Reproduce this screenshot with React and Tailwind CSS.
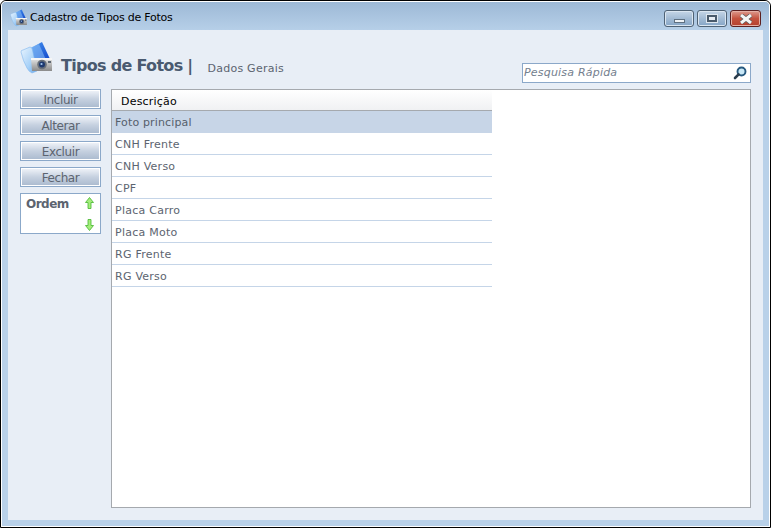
function FolderCam({ s = 34, id = "a" }) {
  return (
    <svg width={s} height={s} viewBox="0 0 34 34" className="shrink-0">
      <defs>
        <linearGradient id={id + "b"} x1="0" y1="0" x2="1" y2="1"><stop offset="0" stopColor="#4a9bf5" /><stop offset="1" stopColor="#0a3cc4" /></linearGradient>
        <linearGradient id={id + "f"} x1="0" y1="0" x2="1" y2="1"><stop offset="0" stopColor="#e9f4fe" /><stop offset="0.6" stopColor="#a9d2f8" /><stop offset="1" stopColor="#6aa9ea" /></linearGradient>
        <linearGradient id={id + "c"} x1="0" y1="0" x2="0" y2="1"><stop offset="0" stopColor="#ececec" /><stop offset="0.45" stopColor="#bdbdbd" /><stop offset="1" stopColor="#8a8a8a" /></linearGradient>
      </defs>
      <path d="M9 8 L22 1 L30 18 L16 24 Z" fill={`url(#${id}b)`} />
      <path d="M7 8 L19 3 L27 21 L13 27 Z" fill="#8fc3f7" opacity="0.55" />
      <path d="M1 11 Q1 9 3 9 L10 6 Q12 6 12.5 9 L17 30 L12 32 Q9 31 7 27 Q3 20 1 11 Z" fill={`url(#${id}f)`} stroke="#7db6ee" strokeWidth="0.6" />
      <path d="M11 17 H32 V30 H12 Z" fill={`url(#${id}c)`} />
      <rect x="11" y="17" width="21" height="2" fill="#f6f6f6" />
      <circle cx="22" cy="23.5" r="4.8" fill="#6a717a" />
      <circle cx="22" cy="23.5" r="3" fill="#1f3a70" />
      <circle cx="21.5" cy="23" r="1.1" fill="#a4c9f2" />
      <rect x="28" y="20" width="3" height="2" fill="#5d6772" />
    </svg>
  );
}
function Btn({ label }) {
  return (
    <div className="h-5 w-[81px] border border-[#8ba8c9] bg-gradient-to-b from-[#f2f5fa] via-[#c6d1e0] to-[#a9b9ce] flex items-center justify-center pt-[1px] text-[12px] leading-none tracking-[-0.4px] text-[#5c6470] shadow-[inset_0_0_0_1px_#ffffff]">
      {label}
    </div>
  );
}
function Arrow({ down }) {
  return (
    <svg width="9" height="12" viewBox="0 0 9 12">
      <path d={down ? "M3 0.5 H6 V6.5 H8.5 L4.5 11.5 L0.5 6.5 H3 Z" : "M4.5 0.5 L8.5 5.5 H6 V11.5 H3 V5.5 H0.5 Z"} fill="#a4ee7c" stroke="#45b52e" strokeWidth="0.8" />
    </svg>
  );
}
const rows = ["CNH Frente", "CNH Verso", "CPF", "Placa Carro", "Placa Moto", "RG Frente", "RG Verso"];
export default function App() {
  return (
    <div className="w-[771px] h-[528px] border border-black rounded-t-[6px] overflow-hidden font-['DejaVu_Sans',sans-serif]">
      <div className="w-full h-full border border-white rounded-t-[5px] bg-[#b9d1e9] flex flex-col overflow-hidden">
        <div className="h-[28px] shrink-0 flex items-start bg-gradient-to-b from-[#9db9d6] to-[#b6cfe8]">
          <div className="flex items-center pl-[8px] pt-[7px]">
            <FolderCam s={18} id="t" />
            <span className="ml-[2px] text-[11px] leading-[14px] tracking-[-0.25px] text-black">Cadastro de Tipos de Fotos</span>
          </div>
          <div className="ml-auto flex gap-[3px] pt-[8px] pr-[8px]">
            <div className="w-[30px] h-[17px] rounded-[3px] border border-[#4f6275] bg-gradient-to-b from-[#c6d6e7] via-[#a3bbd4] to-[#85a5c6] shadow-[inset_0_0_0_1px_#dbe6f1] flex items-end justify-center pb-[3px]">
              <div className="w-[11px] h-[4px] bg-[#eef2f6] border border-[#5f7081]" />
            </div>
            <div className="w-[30px] h-[17px] rounded-[3px] border border-[#4f6275] bg-gradient-to-b from-[#c6d6e7] via-[#a3bbd4] to-[#85a5c6] shadow-[inset_0_0_0_1px_#dbe6f1] flex items-center justify-center">
              <div className="w-[10px] h-[7px] border-2 border-[#4a5a6b] bg-[#e6ecf2] shadow-[0_0_0_1px_#dfe7ef]" />
            </div>
            <div className="w-[31px] h-[17px] rounded-[3px] border border-[#5c2020] bg-gradient-to-b from-[#dc9a8e] via-[#c4533f] to-[#b5402e] shadow-[inset_0_0_0_1px_#e5b0a5] flex items-center justify-center">
              <svg width="16" height="10" viewBox="0 0 16 10"><path d="M3 1 L13 9 M13 1 L3 9" stroke="#5a5a5a" strokeWidth="4.4" /><path d="M3 1 L13 9 M13 1 L3 9" stroke="#f4f4f4" strokeWidth="3" /></svg>
            </div>
          </div>
        </div>
        <div className="mx-[6px] h-[490px] bg-[#e8eef6] flex flex-col px-[12px]">
          <div className="h-[59px] shrink-0 flex">
            <div className="pt-[11px]"><FolderCam s={34} id="h" /></div>
            <span className="ml-[7px] mt-[26px] text-[16px] leading-[20px] font-bold tracking-[-0.7px] text-[#4a5a70] whitespace-nowrap">Tipos de Fotos |</span>
            <span className="ml-[15px] mt-[32px] text-[11px] leading-[14px] tracking-[0.25px] text-[#5c6470]">Dados Gerais</span>
            <div className="ml-auto mt-[33px] w-[229px] h-[20px] border border-[#8ba8c9] bg-white flex items-center justify-between pl-[1px] pr-[3px]">
              <span className="text-[11px] italic text-[#74808e] tracking-[0.2px]">Pesquisa Rápida</span>
              <svg width="14" height="14" viewBox="0 0 14 14"><circle cx="8.5" cy="5.5" r="4" fill="#c9e8f7" stroke="#27597f" strokeWidth="1.9" /><path d="M5.6 8.4 L2 12" stroke="#2c3e4e" strokeWidth="2.6" strokeLinecap="round" /></svg>
            </div>
          </div>
          <div className="flex gap-[10px] h-[419px]">
            <div className="w-[81px] flex flex-col gap-[6px] shrink-0">
              <Btn label="Incluir" /><Btn label="Alterar" /><Btn label="Excluir" /><Btn label="Fechar" />
              <div className="h-[41px] border border-[#8ba8c9] bg-white flex justify-between pl-[5px] pr-[6px] pt-[3px]">
                <span className="text-[12px] leading-[14px] font-bold tracking-[-0.5px] text-[#5c6470]">Ordem</span>
                <div className="flex flex-col gap-[10px]"><Arrow /><Arrow down /></div>
              </div>
            </div>
            <div className="w-[640px] h-[419px] border border-[#a5a9ae] bg-white">
              <div className="w-[380px]">
                <div className="h-[21px] border-b border-b-[#a5a9ae] bg-gradient-to-b from-white to-[#f0f1f3] pl-[9px] pt-[2px] text-[11px] leading-[20px] tracking-[0.2px] text-black">Descrição</div>
                <div className="h-[22px] pl-[3px] pt-[1px] text-[11px] leading-[22px] tracking-[0.15px] bg-[#c7d5e7] text-[#56606c]">Foto principal</div>
                {rows.map((r) => (
                  <div key={r} className="h-[22px] pl-[3px] pt-[1px] text-[11px] leading-[22px] tracking-[0.25px] border-b border-[#c5d5e8] text-[#5c6470]">{r}</div>
                ))}
              </div>
            </div>
          </div>
        </div>
      </div>
    </div>
  );
}
